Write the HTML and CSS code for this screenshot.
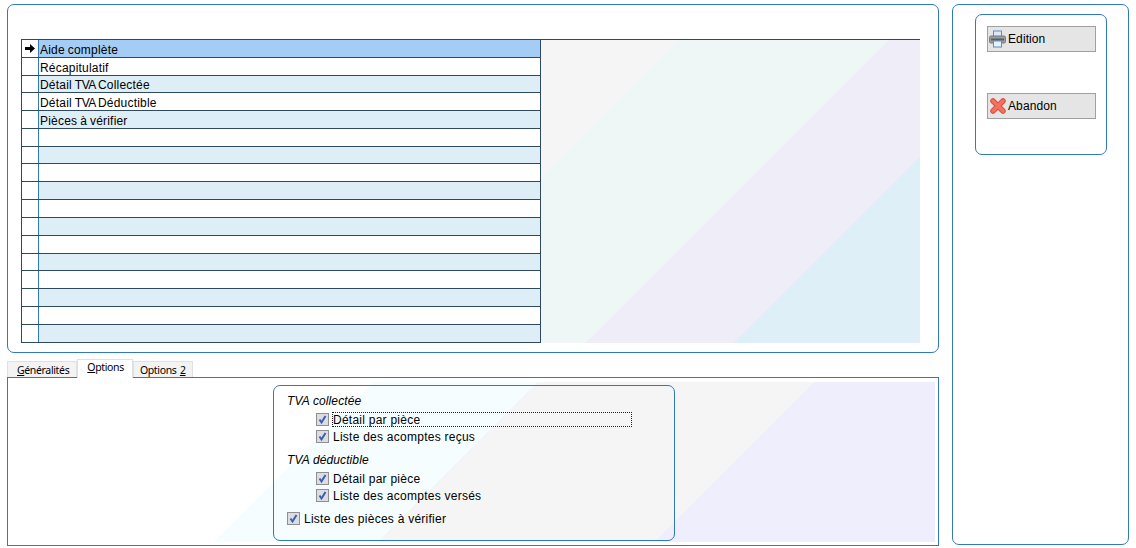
FILE: index.html
```html
<!DOCTYPE html>
<html lang="fr">
<head>
<meta charset="utf-8">
<title>TVA</title>
<link rel="stylesheet" href="styles.css">
</head>
<body>
<div class="page">
  <div class="left">
    <section class="list-panel">
      <div class="grid">
        <div class="rows">
          <div class="row sel"><span class="ind"><svg width="10" height="9" viewBox="0 0 10 9"><path d="M0 3h5V0l5 4.500-5 4.500V6H0z" fill="#000"/></svg></span><span class="cell">Aide complète</span></div>
          <div class="row"><span class="ind"></span><span class="cell">Récapitulatif</span></div>
          <div class="row alt short"><span class="ind"></span><span class="cell">Détail <span class="tva">TVA </span>Collectée</span></div>
          <div class="row"><span class="ind"></span><span class="cell">Détail <span class="tva">TVA </span>Déductible</span></div>
          <div class="row alt"><span class="ind"></span><span class="cell">Pièces à vérifier</span></div>
          <div class="row"><span class="ind"></span><span class="cell"></span></div>
          <div class="row alt short"><span class="ind"></span><span class="cell"></span></div>
          <div class="row"><span class="ind"></span><span class="cell"></span></div>
          <div class="row alt"><span class="ind"></span><span class="cell"></span></div>
          <div class="row"><span class="ind"></span><span class="cell"></span></div>
          <div class="row alt"><span class="ind"></span><span class="cell"></span></div>
          <div class="row"><span class="ind"></span><span class="cell"></span></div>
          <div class="row alt short"><span class="ind"></span><span class="cell"></span></div>
          <div class="row"><span class="ind"></span><span class="cell"></span></div>
          <div class="row alt"><span class="ind"></span><span class="cell"></span></div>
          <div class="row"><span class="ind"></span><span class="cell"></span></div>
          <div class="row alt"><span class="ind"></span><span class="cell"></span></div>
        </div>
        <div class="grid-bg"></div>
      </div>
    </section>
    <div class="tabs">
      <span class="tab first"><u>G</u>énéralités</span>
      <span class="tab active"><u>O</u>ptions</span>
      <span class="tab third">Options <u>2</u></span>
    </div>
    <section class="tab-panel">
      <div class="tab-bg">
        <div class="options">
          <p class="opt-title">TVA collectée</p>
          <div class="check indent focus"><span class="box"><svg width="11" height="11" viewBox="0 0 11 11"><path d="M2.500 5.500l2 3 4-6.500" fill="none" stroke="#3c5fb4" stroke-width="2"/></svg></span><span class="label">Détail par pièce</span></div>
          <div class="check indent"><span class="box"><svg width="11" height="11" viewBox="0 0 11 11"><path d="M2.500 5.500l2 3 4-6.500" fill="none" stroke="#3c5fb4" stroke-width="2"/></svg></span><span class="label">Liste des acomptes reçus</span></div>
          <p class="opt-title second">TVA déductible</p>
          <div class="check indent"><span class="box"><svg width="11" height="11" viewBox="0 0 11 11"><path d="M2.500 5.500l2 3 4-6.500" fill="none" stroke="#3c5fb4" stroke-width="2"/></svg></span><span class="label">Détail par pièce</span></div>
          <div class="check indent"><span class="box"><svg width="11" height="11" viewBox="0 0 11 11"><path d="M2.500 5.500l2 3 4-6.500" fill="none" stroke="#3c5fb4" stroke-width="2"/></svg></span><span class="label">Liste des acomptes versés</span></div>
          <div class="check last"><span class="box"><svg width="11" height="11" viewBox="0 0 11 11"><path d="M2.500 5.500l2 3 4-6.500" fill="none" stroke="#3c5fb4" stroke-width="2"/></svg></span><span class="label">Liste des pièces à vérifier</span></div>
        </div>
      </div>
    </section>
  </div>
  <aside class="right">
    <div class="actions">
      <button class="btn" type="button">
        <svg class="icon-print" width="17" height="18" viewBox="0 0 17 18"><rect x="4.500" y="1" width="8" height="6" fill="#dbe9f6" stroke="#5b8fc0"/><rect x="0.500" y="6" width="16" height="7" rx="1.500" fill="#9a9ea2" stroke="#74787c"/><rect x="2" y="8.500" width="13" height="2" fill="#5a5e62"/><rect x="4.500" y="11" width="8" height="6" fill="#e9f2fa" stroke="#5b8fc0"/></svg>
        Edition
      </button>
      <button class="btn" type="button">
        <svg class="icon-close" width="16" height="16" viewBox="0 0 16 16"><path d="M3 3l10 10M13 3L3 13" fill="none" stroke="#d4523f" stroke-width="5.500" stroke-linecap="round"/><path d="M3 3l10 10M13 3L3 13" fill="none" stroke="#f5705f" stroke-width="3.500" stroke-linecap="round"/></svg>
        Abandon
      </button>
    </div>
  </aside>
</div>
</body>
</html>
```
FILE: styles.css
```css
html, body {
  margin: 0;
  padding: 0;
  background: #fff;
}
body {
  width: 1136px;
  height: 548px;
  overflow: hidden;
  font-family: "Liberation Sans", Arial, sans-serif;
  font-size: 12px;
  color: #000;
}
.page {
  display: flex;
  gap: 13px;
  padding: 4px 0 0 7px;
}
.left {
  width: 932px;
  display: flex;
  flex-direction: column;
}
.list-panel {
  box-sizing: border-box;
  height: 349px;
  border: 1px solid #3079bb;
  border-radius: 7px;
  padding: 34px 18px 9px 13px;
}
.grid {
  display: flex;
  box-sizing: border-box;
  height: 304px;
  border-top: 1px solid #2f4a5e;
}
.rows {
  width: 520px;
  flex: none;
  border-left: 1px solid #2f4a5e;
  border-right: 1px solid #2f4a5e;
  box-sizing: border-box;
}
.row {
  display: flex;
  height: 18px;
  box-sizing: border-box;
  border-bottom: 1px solid #2f4a5e;
}
.row.short { height: 17px; }
.row.alt .cell { background: #ddeef7; }
.row.sel .cell { background: #a4cdf5; }
.ind {
  width: 13px;
  flex: none;
  border-right: 1px solid #3079bb;
  display: flex;
  align-items: center;
  justify-content: flex-end;
  padding-right: 3px;
}
.cell {
  flex: 1;
  box-sizing: border-box;
  height: 17px;
  padding: 3px 0 0 1px;
  line-height: 15px;
  letter-spacing: .2px;
  word-spacing: -.6px;
  white-space: nowrap;
  overflow: hidden;
}
.row.short .cell {
  height: 16px;
  padding-top: 2px;
}
.tva {
  letter-spacing: -.5px;
  word-spacing: 0;
}
.grid-bg {
  flex: 1;
  background: linear-gradient(135deg,
    #f5f5f5 0 96.9px,
    #eef7f5 96.9px 245.4px,
    #efeef8 245.4px 350.7px,
    #deeff7 350.7px);
}
.tabs {
  display: flex;
  align-items: flex-end;
  height: 24px;
}
.tab {
  box-sizing: border-box;
  height: 16px;
  padding: 1px 9px 0;
  border: 1px solid #e0e0e0;
  border-bottom: 0;
  background: #f3f3f3;
  line-height: 15px;
  letter-spacing: -.35px;
  font-family: "Noto Sans", sans-serif;
  font-size: 10.5px;
  white-space: nowrap;
}
.tab.first { padding-right: 7px; }
.tab.third {
  padding: 1px 6px 0;
  word-spacing: 1px;
}
.tab.active {
  position: relative;
  height: 19px;
  padding: 0 8px 0 9px;
  background: #fff;
  margin-bottom: -1px;
}
.tab-panel {
  box-sizing: border-box;
  height: 169px;
  border: 1px solid #3079bb;
  padding: 4px 3px 3px 3px;
}
.tab-bg {
  height: 160px;
  box-sizing: border-box;
  padding: 3px 260px 1px 262px;
  background: linear-gradient(135deg,
    #fff 0 256px,
    #f5fdfe 256px 372px,
    #f5f5f5 372px 568px,
    #eeeefd 568px);
}
.options {
  box-sizing: border-box;
  height: 156px;
  border: 1px solid #3079bb;
  border-radius: 7px;
  padding: 8px 0 0 13px;
  letter-spacing: .25px;
}
.opt-title {
  margin: 0;
  height: 15px;
  line-height: 15px;
  font-style: italic;
  letter-spacing: .1px;
}
.opt-title.second {
  margin: 8px 0 2px;
}
.check {
  display: flex;
  align-items: center;
  height: 17px;
  white-space: nowrap;
}
.check.indent { margin-left: 29px; }
.check.last { margin-top: 6px; }
.check.focus {
  height: 15px;
  margin-top: 3px;
  margin-bottom: 1px;
}
.label {
  flex: 1;
  box-sizing: border-box;
  height: 15px;
  padding: 1px 0 0 1px;
  line-height: 15px;
}
.focus .label {
  margin-right: 42px;
  outline: 1px dotted #222;
  outline-offset: -1px;
}
.box {
  box-sizing: border-box;
  width: 13px;
  height: 13px;
  margin-right: 3px;
  border: 1px solid #8e8f8f;
  background: #dcdde2;
  display: flex;
  align-items: center;
  justify-content: center;
  flex: none;
}
.right {
  box-sizing: border-box;
  width: 177px;
  height: 541px;
  border: 1px solid #3079bb;
  border-radius: 7px;
  padding: 9px 21px 0 22px;
}
.actions {
  box-sizing: border-box;
  height: 141px;
  border: 1px solid #3079bb;
  border-radius: 7px;
  padding: 11px 10px 0 11px;
  display: flex;
  flex-direction: column;
  gap: 41px;
}
.btn {
  box-sizing: border-box;
  width: 109px;
  height: 26px;
  flex: none;
  border: 1px solid #a0a0a0;
  background: #e5e5e5;
  font: inherit;
  letter-spacing: .1px;
  color: #000;
  padding: 0 0 0 1px;
  display: flex;
  align-items: center;
  gap: 2px;
  text-align: left;
}
.icon-close { margin-left: 1px; }
```
